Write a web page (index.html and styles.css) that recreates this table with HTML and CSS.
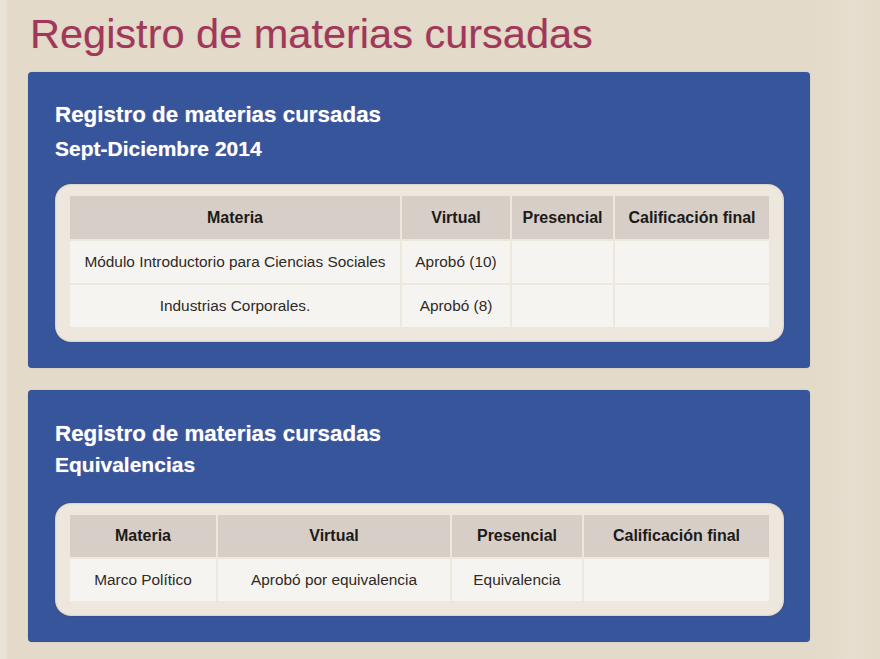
FILE: index.html
```html
<!DOCTYPE html>
<html lang="es">
<head>
<meta charset="utf-8">
<title>Registro de materias cursadas</title>
<link rel="stylesheet" href="styles.css">
</head>
<body>
<main class="page">
  <h1 class="page-title">Registro de materias cursadas</h1>

  <section class="panel">
    <h2 class="panel-title">Registro de materias cursadas</h2>
    <h3 class="panel-sub">Sept-Diciembre 2014</h3>
    <div class="table-wrap">
      <table class="grades grades-1">
        <colgroup>
          <col class="c1"><col class="c2"><col class="c3"><col class="c4">
        </colgroup>
        <thead>
          <tr><th>Materia</th><th>Virtual</th><th>Presencial</th><th>Calificación final</th></tr>
        </thead>
        <tbody>
          <tr><td>Módulo Introductorio para Ciencias Sociales</td><td>Aprobó (10)</td><td></td><td></td></tr>
          <tr><td>Industrias Corporales.</td><td>Aprobó (8)</td><td></td><td></td></tr>
        </tbody>
      </table>
    </div>
  </section>

  <section class="panel panel-2">
    <h2 class="panel-title">Registro de materias cursadas</h2>
    <h3 class="panel-sub panel-sub-2">Equivalencias</h3>
    <div class="table-wrap">
      <table class="grades grades-2">
        <colgroup>
          <col class="c1"><col class="c2"><col class="c3"><col class="c4">
        </colgroup>
        <thead>
          <tr><th>Materia</th><th>Virtual</th><th>Presencial</th><th>Calificación final</th></tr>
        </thead>
        <tbody>
          <tr><td>Marco Político</td><td>Aprobó por equivalencia</td><td>Equivalencia</td><td></td></tr>
        </tbody>
      </table>
    </div>
  </section>
</main>
</body>
</html>
```

FILE: styles.css
```css
* { box-sizing: border-box; }

html, body {
  margin: 0;
  padding: 0;
  background: #e3dac9;
}

body {
  font-family: "Liberation Sans", Arial, sans-serif;
  min-height: 659px;
  background: linear-gradient(to right, #e9e2d6 0, #e9e2d6 6px, #e3dac9 8px, #e3dac9 812px, #e6dece 850px, #e4dbcb 880px);
}

.page {
  padding: 10px 0 20px 28px;
  width: 810px;
}

.page-title {
  margin: 0 0 14px 2px;
  font-size: 41.5px;
  line-height: 48px;
  font-weight: normal;
  color: #a0385a;
  text-shadow: 0 0 1px rgba(190, 90, 120, 0.4);
}

.panel {
  background: #36559b;
  border-radius: 4px;
  padding: 26px 26px 26px 27px;
  margin-bottom: 22px;
  box-shadow: 0 0 1px rgba(40, 50, 90, 0.4);
}

.panel-2 {
  padding-top: 27px;
}

.panel-title {
  margin: 0;
  font-size: 22.4px;
  line-height: 34px;
  font-weight: bold;
  color: #ffffff;
  text-shadow: 0 0 1px rgba(230, 200, 230, 0.7);
}

.panel-sub {
  margin: 0 0 18px;
  font-size: 21px;
  line-height: 34px;
  font-weight: bold;
  color: #ffffff;
  text-shadow: 0 0 1px rgba(230, 200, 230, 0.7);
}

.panel-sub-2 {
  margin-top: -3px;
  margin-bottom: 21px;
}

.table-wrap {
  background: #ede7dd;
  border-radius: 16px;
  padding: 10px 13px 13px 13px;
  box-shadow: inset 0 0 2px rgba(120, 100, 70, 0.45), 0 0 1px rgba(20, 30, 70, 0.5);
}

.grades {
  width: 703px;
  border-collapse: separate;
  border-spacing: 2px;
  table-layout: fixed;
}

.grades th,
.grades td {
  height: 42px;
  padding: 0 4px;
  text-align: center;
  vertical-align: middle;
  font-size: 15.4px;
  color: #2e2a26;
}

.grades th {
  background: #d6cec7;
  font-weight: bold;
  font-size: 16px;
  color: #1c1a18;
  height: 43px;
}

.grades-2 th {
  height: 42px;
}

.grades td {
  background: #f6f4f1;
}

.grades-1 .c1 { width: 330px; }
.grades-1 .c2 { width: 108px; }
.grades-1 .c3 { width: 101px; }
.grades-1 .c4 { width: 154px; }

.grades-2 .c1 { width: 146px; }
.grades-2 .c2 { width: 232px; }
.grades-2 .c3 { width: 130px; }
.grades-2 .c4 { width: 185px; }
```
